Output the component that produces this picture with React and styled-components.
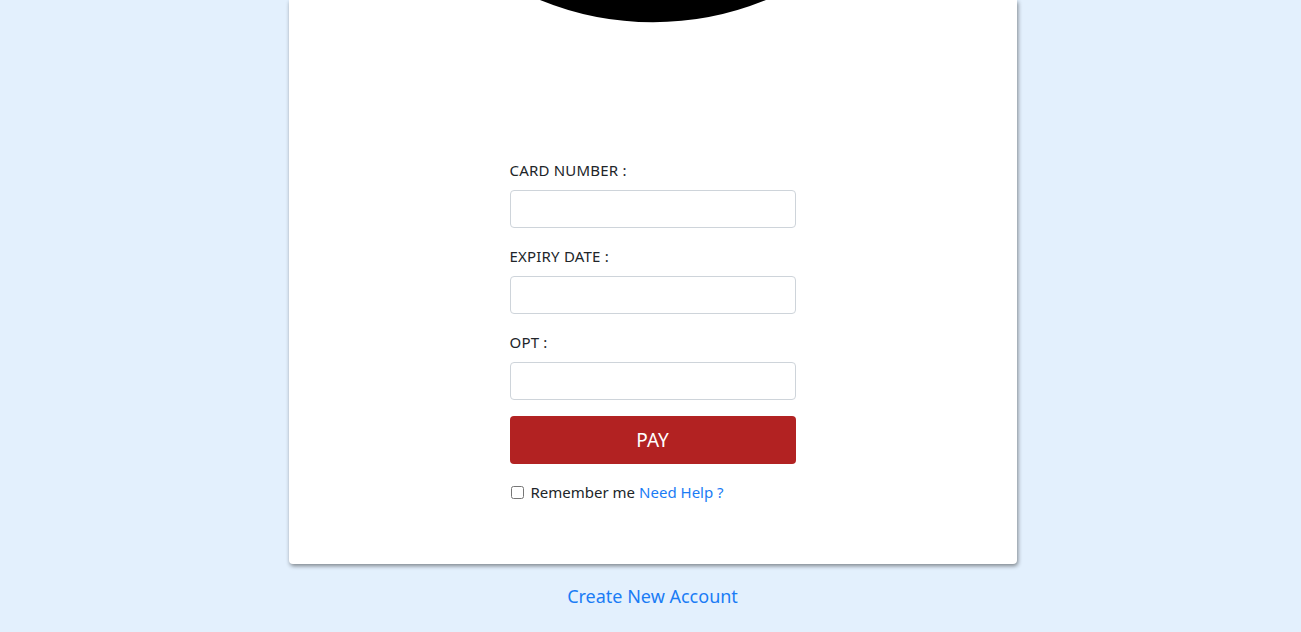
import React from 'react';
import styled, {createGlobalStyle} from 'styled-components';

const GlobalStyle = createGlobalStyle`
  body {
    margin: 0;
    background: #e3f0fd;
    font-family: "Noto Sans", "Open Sans", Arial, sans-serif;
    color: #212529;
  }
`;

const Page = styled.div`
  display: flex;
  flex-direction: column;
  align-items: center;
  min-height: 632px;
  padding-left: 4px;
`;

const Card = styled.div`
  width: 728px;
  background: #ffffff;
  border-radius: 0 0 4px 4px;
  box-shadow: 1px 2px 4px rgba(0, 0, 0, 0.45);
  display: flex;
  flex-direction: column;
  align-items: center;
  padding-bottom: 62px;
`;

const Logo = styled.svg`
  display: block;
  margin-bottom: 137px;
`;

const Form = styled.form`
  width: 286px;
  display: flex;
  flex-direction: column;
`;

const Label = styled.label`
  font-size: 15px;
  letter-spacing: 0.2px;
  line-height: 20px;
  margin-bottom: 10px;
`;

const Input = styled.input`
  box-sizing: border-box;
  width: 100%;
  height: 38px;
  border: 1px solid #ced4da;
  border-radius: 4px;
  margin-bottom: 18px;
  padding: 6px 12px;
  font-size: 15px;
  &:last-of-type {
    margin-bottom: 16px;
  }
`;

const PayButton = styled.button`
  height: 48px;
  border: none;
  border-radius: 4px;
  background: #b22222;
  color: #ffffff;
  font-family: inherit;
  font-size: 19px;
  cursor: pointer;
`;

const Remember = styled.div`
  display: flex;
  align-items: center;
  margin-top: 18px;
  font-size: 15px;
  line-height: 20px;
`;

const Check = styled.input`
  width: 13px;
  height: 13px;
  margin: 0 7px 0 1px;
`;

const Link = styled.a`
  color: #1a7cf5;
  text-decoration: none;
  margin-left: ${p => p.$gap || 0}px;
  font-size: ${p => p.$size || 15}px;
`;

const Footer = styled.div`
  margin-top: 20px;
  line-height: 24px;
`;

function App() {
    return (
        <Page>
            <GlobalStyle/>
            <Card>
                <Logo width="226" height="23" viewBox="0 0 226 23">
                    <path d="M0 0 A298 298 0 0 0 226 0 Z" fill="#000"/>
                </Logo>
                <Form onSubmit={e => e.preventDefault()}>
                    <Label>CARD NUMBER :</Label>
                    <Input type="text"/>
                    <Label>EXPIRY DATE :</Label>
                    <Input type="text"/>
                    <Label>OPT :</Label>
                    <Input type="text"/>
                    <PayButton>PAY</PayButton>
                    <Remember>
                        <Check type="checkbox"/>
                        Remember me
                        <Link href="#" $gap={4}>Need Help ?</Link>
                    </Remember>
                </Form>
            </Card>
            <Footer>
                <Link href="#" $size={18}>Create New Account</Link>
            </Footer>
        </Page>
    );
}

export default App;
